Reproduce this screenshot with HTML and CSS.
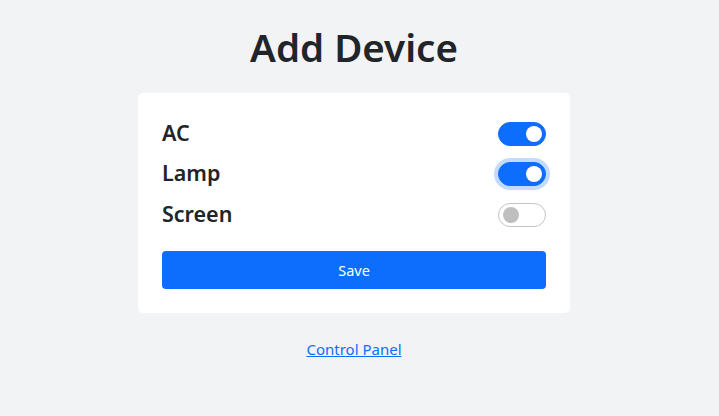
FILE: index.html
```html
<!DOCTYPE html>
<html>
<head>
<meta charset="utf-8">
<link rel="stylesheet" href="styles.css">
</head>
<body>
<main class="page">
  <h1 class="title">Add Device</h1>
  <section class="card">
    <div class="row"><span class="label">AC</span><span class="switch on"></span></div>
    <div class="row"><span class="label">Lamp</span><span class="switch on focus"></span></div>
    <div class="row"><span class="label">Screen</span><span class="switch"></span></div>
    <button class="save">Save</button>
  </section>
  <a class="link" href="#">Control Panel</a>
</main>
</body>
</html>
```
FILE: styles.css
```css
html, body { margin: 0; padding: 0; }
body {
  background: #f2f3f5;
  font-family: "Noto Sans", "Open Sans", sans-serif;
  color: #212529;
  height: 416px;
}
.page {
  width: 708px;
  display: flex;
  flex-direction: column;
  align-items: center;
}
.title {
  margin: 22px 0 0;
  height: 50px;
  line-height: 50px;
  font-size: 38.5px;
  font-weight: 600;
}
.card {
  margin-top: 21px;
  width: 384px;
  background: #fff;
  border-radius: 5px;
  padding: 24px;
  display: flex;
  flex-direction: column;
  gap: 7.5px;
}
.row {
  height: 33px;
  display: flex;
  align-items: center;
  justify-content: space-between;
}
.label {
  font-size: 21.5px;
  font-weight: 600;
  line-height: 30px;
  margin-top: -2px;
}
.switch {
  position: relative;
  width: 48px;
  height: 24px;
  box-sizing: border-box;
  border-radius: 12px;
  border: 1px solid #c4c4c4;
  background: #fff;
}
.switch::after {
  content: "";
  position: absolute;
  top: 3px;
  left: 4px;
  width: 16px;
  height: 16px;
  border-radius: 50%;
  background: #bfbfbf;
}
.switch.on {
  background: #0d6efd;
  border-color: #0d6efd;
}
.switch.on::after {
  left: auto;
  right: 3px;
  background: #fff;
}
.switch.focus {
  box-shadow: 0 0 0 4px rgba(13, 110, 253, 0.25);
}
.save {
  margin-top: 12.5px;
  height: 38px;
  border: 0;
  border-radius: 4px;
  background: #0d6efd;
  color: #fff;
  font-family: inherit;
  font-size: 14.5px;
}
.link {
  margin-top: 25px;
  font-size: 15px;
  color: #0d6efd;
  line-height: 22px;
}
```
